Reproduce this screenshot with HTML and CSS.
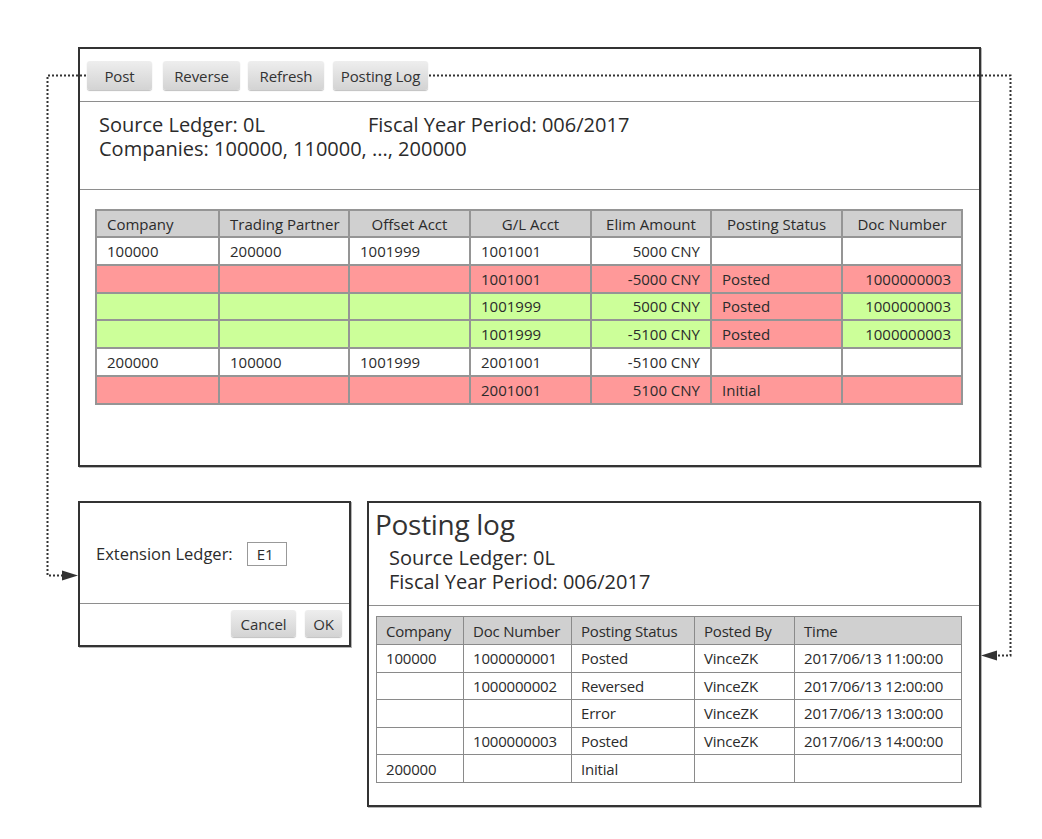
FILE: index.html
```html
<!DOCTYPE html>
<html>
<head>
<meta charset="utf-8">
<link rel="stylesheet" href="styles.css">
</head>
<body>
<div class="canvas">
  <div class="win main-win">
    <div class="toolbar">
      <button class="btn btn-post">Post</button>
      <button class="btn btn-reverse">Reverse</button>
      <button class="btn btn-refresh">Refresh</button>
      <button class="btn btn-log">Posting Log</button>
    </div>
    <div class="info">
      <div class="info-line"><span class="info-first">Source Ledger: 0L</span><span>Fiscal Year Period: 006/2017</span></div>
      <div class="info-line">Companies: 100000, 110000, ..., 200000</div>
    </div>
    <div class="grid-wrap">
      <table class="grid">
        <colgroup>
          <col class="c1"><col class="c2"><col class="c3"><col class="c4"><col class="c5"><col class="c6"><col class="c7">
        </colgroup>
        <thead>
          <tr>
            <th class="l">Company</th><th class="l">Trading Partner</th><th>Offset Acct</th><th>G/L Acct</th><th>Elim Amount</th><th>Posting Status</th><th>Doc Number</th>
          </tr>
        </thead>
        <tbody>
          <tr class="white"><td>100000</td><td>200000</td><td>1001999</td><td>1001001</td><td class="r">5000 CNY</td><td></td><td></td></tr>
          <tr class="red"><td></td><td></td><td></td><td>1001001</td><td class="r">-5000 CNY</td><td>Posted</td><td class="r">1000000003</td></tr>
          <tr class="green"><td></td><td></td><td></td><td>1001999</td><td class="r">5000 CNY</td><td class="redc">Posted</td><td class="r">1000000003</td></tr>
          <tr class="green"><td></td><td></td><td></td><td>1001999</td><td class="r">-5100 CNY</td><td class="redc">Posted</td><td class="r">1000000003</td></tr>
          <tr class="white"><td>200000</td><td>100000</td><td>1001999</td><td>2001001</td><td class="r">-5100 CNY</td><td></td><td></td></tr>
          <tr class="red"><td></td><td></td><td></td><td>2001001</td><td class="r">5100 CNY</td><td>Initial</td><td></td></tr>
        </tbody>
      </table>
    </div>
  </div>

  <div class="bottom-row">
    <div class="win dialog">
      <div class="dialog-body">
        <span class="label">Extension Ledger:</span>
        <span class="input">E1</span>
      </div>
      <div class="dialog-foot">
        <button class="btn btn-cancel">Cancel</button>
        <button class="btn btn-ok">OK</button>
      </div>
    </div>

    <div class="win log">
      <div class="log-head">
        <div class="log-title">Posting log</div>
        <div class="log-info">
          <div class="info-line">Source Ledger: 0L</div>
          <div class="info-line">Fiscal Year Period: 006/2017</div>
        </div>
      </div>
      <div class="log-wrap">
        <table class="logtable">
          <colgroup>
            <col class="l1"><col class="l2"><col class="l3"><col class="l4"><col class="l5">
          </colgroup>
          <thead>
            <tr><th>Company</th><th>Doc Number</th><th>Posting Status</th><th>Posted By</th><th>Time</th></tr>
          </thead>
          <tbody>
            <tr><td>100000</td><td>1000000001</td><td>Posted</td><td>VinceZK</td><td>2017/06/13 11:00:00</td></tr>
            <tr><td></td><td>1000000002</td><td>Reversed</td><td>VinceZK</td><td>2017/06/13 12:00:00</td></tr>
            <tr><td></td><td></td><td>Error</td><td>VinceZK</td><td>2017/06/13 13:00:00</td></tr>
            <tr><td></td><td>1000000003</td><td>Posted</td><td>VinceZK</td><td>2017/06/13 14:00:00</td></tr>
            <tr><td>200000</td><td></td><td>Initial</td><td></td><td></td></tr>
          </tbody>
        </table>
      </div>
    </div>
  </div>

  <svg class="connectors" width="1042" height="839" viewBox="0 0 1042 839">
    <path class="dots" d="M86 75.5 H47.5 V575.5 H62"/>
    <polygon class="head" points="62,570.5 78,575.5 62,580.5"/>
    <path class="dots" d="M429 75.5 H1010.5 V655.5 H997"/>
    <polygon class="head" points="997,650.5 981,655.5 997,660.5"/>
  </svg>
</div>
</body>
</html>
```

FILE: styles.css
```css
html, body {
  margin: 0;
  padding: 0;
  background: #ffffff;
}

body {
  font-family: "Open Sans", "Noto Sans", "DejaVu Sans", sans-serif;
  color: #2b2b2b;
}

.canvas {
  position: relative;
  width: 1042px;
  height: 839px;
  padding-top: 47px;
  box-sizing: border-box;
}

.win {
  border: 2px solid #333;
  box-shadow: 1px 1px 0 #b5b5b5;
  background: #fff;
  box-sizing: border-box;
}

.main-win {
  margin-left: 78px;
  width: 903px;
  height: 420px;
}

/* toolbar */
.toolbar {
  display: flex;
  gap: 9px;
  padding: 12px 7px 11px 7px;
  border-bottom: 1px solid #8e8e8e;
}

.btn {
  font-family: inherit;
  font-size: 15px;
  color: #333;
  height: 29px;
  padding: 0;
  border: none;
  border-radius: 3px;
  background: linear-gradient(#eeeeee, #d3d3d3);
  box-shadow: 0 1px 1px rgba(0, 0, 0, 0.25);
  letter-spacing: -0.1px;
}

.btn-post { width: 65px; }
.btn-reverse { width: 77px; margin-left: 2px; }
.btn-refresh { width: 76px; margin-left: -1px; }
.btn-log { width: 95px; }

/* info */
.info {
  padding: 11px 19px 28px 19px;
  border-bottom: 1px solid #8e8e8e;
  font-size: 20px;
  line-height: 24px;
}

.info-line {
  display: flex;
  white-space: nowrap;
}

.info-first {
  width: 269px;
}

/* main grid */
.grid-wrap {
  padding: 19px 18px 0 15px;
}

.grid {
  border-collapse: collapse;
  table-layout: fixed;
  width: 866px;
  font-size: 15px;
}

.grid col.c1 { width: 123px; }
.grid col.c2 { width: 130px; }
.grid col.c3 { width: 121px; }
.grid col.c4 { width: 121px; }
.grid col.c5 { width: 120px; }
.grid col.c6 { width: 131px; }
.grid col.c7 { width: 120px; }

.grid th,
.grid td {
  border: 2px solid #959595;
  height: 25.8px;
  padding: 0 10px;
  white-space: nowrap;
  overflow: hidden;
}

.grid th {
  background: #d0d0d0;
  font-weight: normal;
  text-align: center;
  height: 25px;
}

.grid th.l { text-align: left; }

.grid td { text-align: left; }
.grid td.r { text-align: right; }

.grid tr.white td { background: #ffffff; }
.grid tr.red td { background: #ff9999; }
.grid tr.green td { background: #ccff99; }
.grid tr td.redc { background: #ff9999; }

/* bottom row */
.bottom-row {
  display: flex;
  align-items: flex-start;
  gap: 16px;
  margin-top: 34px;
  margin-left: 78px;
}

.dialog {
  width: 273px;
  height: 146px;
  display: flex;
  flex-direction: column;
}

.dialog-body {
  height: 101px;
  display: flex;
  align-items: center;
  padding-left: 16px;
  border-bottom: 1px solid #8e8e8e;
  font-size: 16.5px;
  box-sizing: border-box;
}

.label {
  margin-right: 14px;
}

.input {
  width: 40px;
  height: 24px;
  border: 1px solid #999;
  box-sizing: border-box;
  font-size: 15px;
  line-height: 22px;
  padding-left: 9px;
  margin-top: 1px;
}

.dialog-foot {
  display: flex;
  justify-content: flex-end;
  gap: 9px;
  padding: 6px 7px 0 0;
}

.btn-cancel { width: 65px; height: 27px; }
.btn-ok { width: 37px; height: 27px; }

/* posting log */
.log {
  width: 614px;
  height: 306px;
}

.log-head {
  padding: 4px 6px 11px 6px;
  border-bottom: 1px solid #8e8e8e;
}

.log-title {
  font-size: 28px;
  line-height: 34px;
  letter-spacing: -0.3px;
  color: #333;
}

.log-info {
  margin-top: 5px;
  padding-left: 14px;
  font-size: 20px;
  line-height: 24px;
}

.log-wrap {
  padding: 10px 0 0 7px;
}

.logtable {
  border-collapse: collapse;
  table-layout: fixed;
  width: 585px;
  font-size: 15px;
  letter-spacing: -0.2px;
}

.logtable col.l1 { width: 87px; }
.logtable col.l2 { width: 108px; }
.logtable col.l3 { width: 123px; }
.logtable col.l4 { width: 100px; }
.logtable col.l5 { width: 167px; }

.logtable th,
.logtable td {
  border: 1px solid #8a8a8a;
  height: 26.6px;
  padding: 0 9px;
  text-align: left;
  white-space: nowrap;
  overflow: hidden;
}

.logtable th {
  background: #d0d0d0;
  font-weight: normal;
  height: 27px;
}

/* connectors */
.connectors {
  position: absolute;
  left: 0;
  top: 0;
  pointer-events: none;
}

.connectors .dots {
  fill: none;
  stroke: #333;
  stroke-width: 2;
  stroke-dasharray: 2 2;
}

.connectors .head {
  fill: #333;
}
```
